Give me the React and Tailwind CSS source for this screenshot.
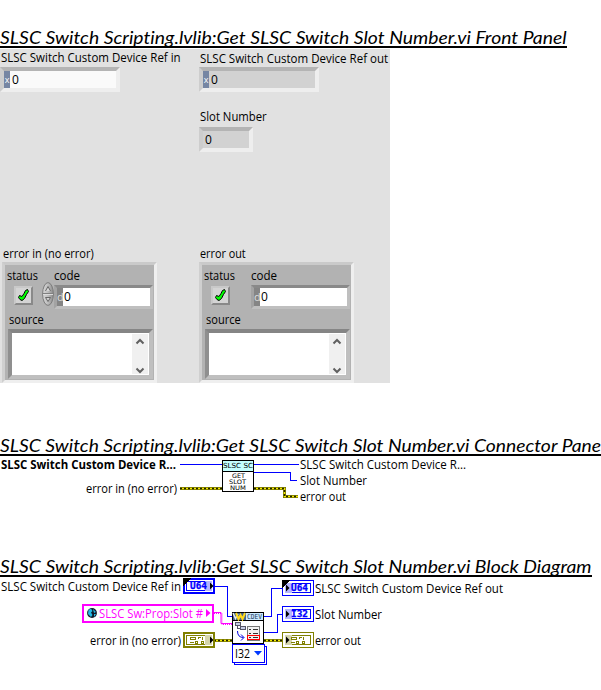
import { useLayoutEffect, useRef } from 'react';

/* Text squeezed or stretched to a fixed advance width. */
function Fit({ w, className = '', children }) {
  const ref = useRef(null);
  useLayoutEffect(() => {
    const el = ref.current;
    el.style.transform = 'none';
    el.style.transform = `scaleX(${w / el.offsetWidth})`;
  }, [w]);
  return (
    <span ref={ref} className={`inline-block origin-left whitespace-nowrap ${className}`}>
      {children}
    </span>
  );
}

function Heading({ w, children }) {
  return (
    <h2 className="h-[21px] w-[601px] overflow-hidden pt-px font-['Lato'] text-[17.3px] leading-[24px] italic [font-variant-ligatures:none]">
      <Fit w={w}>{children}</Fit>
    </h2>
  );
}

const label = "block h-4 text-[12px] leading-4";

function RadixBox({ width, fill, children }) {
  return (
    <div className={`flex h-[25px] border-4 border-t-[#b4b4b4] border-r-[#eeeeee] border-b-[#eeeeee] border-l-[#cdcdcd] ${width} ${fill}`}>
      {children}
    </div>
  );
}

function Radix() {
  return <span className="mr-0.5 w-1.5 bg-[#7686a3] text-center text-[9px] leading-[18px] text-white">x</span>;
}

function Chevron({ up }) {
  return (
    <svg className="h-[7px] w-2.5" viewBox="0 0 10 7">
      <path d={up ? 'M1.5 5.5L5 2L8.5 5.5' : 'M1.5 1.5L5 5L8.5 1.5'} fill="none" stroke="#606060" strokeWidth="2" />
    </svg>
  );
}

function Check() {
  return (
    <svg className="h-[13px] w-[13px]" viewBox="0 0 13 13">
      <path d="M8.5 1.5L10.5 .5L11.5 2.5L9.5 5.5L7.5 9.5L5 11.5L3 10.500L1.5 8.5L2.5 6.500L5 7.500L7 4.500Z" fill="#00ff00" stroke="#000" />
    </svg>
  );
}

function Spinner() {
  return (
    <svg className="h-6 w-3" viewBox="0 0 12 24">
      <defs>
        <linearGradient id="knob">
          <stop offset="0" stopColor="#d8d8d8" />
          <stop offset=".5" stopColor="#bdbdbd" />
          <stop offset="1" stopColor="#8a8a8a" />
        </linearGradient>
      </defs>
      <ellipse cx="6" cy="12" rx="5.4" ry="11.4" fill="url(#knob)" stroke="#7c7c7c" />
      <path d="M1 11.500H11" stroke="#808080" />
      <path d="M1 12.500H11" stroke="#dcdcdc" />
      <path d="M3.500 9L6 4.500L8.500 9M3.500 15.500H8.500L6 19.500Z" fill="#d6d6d6" stroke="#686868" />
    </svg>
  );
}

function ErrorCluster({ spinner }) {
  return (
    <div className="h-[121px] w-[155px] border-[3px] border-t-[#cacaca] border-r-[#efefef] border-b-[#efefef] border-l-[#cfcfcf] bg-[#b2b2b2]">
      <div className="flex h-[19px] pt-0.5">
        <span className={`${label} ml-0.5 w-[47px] pt-px`}><Fit w={31}>status</Fit></span>
        <span className={`${label} pt-px`}><Fit w={26}>code</Fit></span>
      </div>
      <div className="flex h-[26px] pt-px">
        <div className="mt-px ml-[9px] flex h-[19px] w-[19px] items-center justify-center border-2 border-t-[#c9c9c9] border-r-[#898989] border-b-[#898989] border-l-[#c9c9c9] bg-[#d4d4d4]">
          <Check />
        </div>
        <div className="-mt-[3px] ml-[9px] w-3 shrink-0">{spinner && <Spinner />}</div>
        <div className="flex h-6 w-[99px] shrink-0 border-[3px] border-t-[#898989] border-r-[#bfbfbf] border-b-[#bfbfbf] border-l-[#a3a3a3] bg-white">
          <span className="w-1.5 bg-[#858585] text-center text-[11px] leading-[18px] text-[#dddddd]">d</span>
          <span className="ml-px text-[12px] leading-[18px]">0</span>
        </div>
      </div>
      <span className={`${label} ml-1 h-[19px] pt-0.5`}><Fit w={35}>source</Fit></span>
      <div className="ml-[3px] flex h-[50px] w-[145px] justify-end border-4 border-t-[#858585] border-r-[#bfbfbf] border-b-[#bfbfbf] border-l-[#8f8f8f] bg-white">
        <div className="mt-px mr-px flex h-[40px] w-4 flex-col items-center justify-between bg-[#f0f0f0] pt-1">
          <Chevron up />
          <Chevron />
        </div>
      </div>
    </div>
  );
}

function FrontPanel() {
  return (
    <div className="flex h-[334px] w-[390px] overflow-hidden bg-[#e1e1e1] pt-px">
      <div className="w-[199px] shrink-0">
        <span className={`${label} ml-px`}><Fit w={180}>SLSC Switch Custom Device Ref in</Fit></span>
        <div className="mt-px h-[179px]">
          <RadixBox width="w-[120px]" fill="bg-[#fafafa]"><Radix /><span className="text-[12px] leading-[17px]">0</span></RadixBox>
        </div>
        <span className={`${label} ml-[3px]`}><Fit w={91}>error in (no error)</Fit></span>
        <div className="ml-0.5"><ErrorCluster spinner /></div>
      </div>
      <div className="w-[191px] shrink-0">
        <span className={`${label} ml-px pt-px`}><Fit w={188}>SLSC Switch Custom Device Ref out</Fit></span>
        <div className="mt-px h-[42px]">
          <RadixBox width="w-[120px]" fill="bg-[#d2d2d2]"><Radix /><span className="text-[12px] leading-[17px]">0</span></RadixBox>
        </div>
        <span className={`${label} ml-px`}><Fit w={67}>Slot Number</Fit></span>
        <div className="mt-0.5 h-[119px]">
          <RadixBox width="w-[54px]" fill="bg-[#d2d2d2]"><span className="ml-0.5 text-[12px] leading-[17px]">0</span></RadixBox>
        </div>
        <span className={`${label} ml-px`}><Fit w={46}>error out</Fit></span>
        <ErrorCluster />
      </div>
    </div>
  );
}

function Txt({ x, y, w, children, ...rest }) {
  return <text x={x} y={y} textLength={w} lengthAdjust="spacingAndGlyphs" fontSize="12" {...rest}>{children}</text>;
}

function ErrorWire({ d }) {
  return (
    <g fill="none">
      <path d={d} stroke="#6b6b00" strokeWidth="3" />
      <path d={d} stroke="#f5ec00" strokeWidth="1.6" />
      <path d={d} stroke="#202000" strokeWidth="1.6" strokeDasharray="2 2" />
    </g>
  );
}

const tiny = { fontSize: '6.2', fontFamily: 'DejaVu Sans', fontWeight: '400' };

function ConnectorPane() {
  return (
    <svg className="block h-[54px] w-[601px]" viewBox="0 456 601 54">
      <g fill="none" stroke="#0000ff" shapeRendering="crispEdges">
        <path d="M180 464.5H222M254 464.5H299M254 472.5H290.500V480.500H297" />
      </g>
      <ErrorWire d="M180 488.500H222" />
      <ErrorWire d="M254 488.500H284.500V496.500H298" />
      <g shapeRendering="crispEdges">
        <rect x="222.500" y="460.500" width="31" height="31" fill="#fff" stroke="#000" />
        <rect x="223" y="461" width="30" height="10" fill="#c4ffff" />
        <path d="M222 471.500H254" stroke="#000" />
      </g>
      <Txt x={223} y={468} w={30} {...tiny} fontSize="7">SLSC SC</Txt>
      <Txt x={232} y={478} w={13} {...tiny}>GET</Txt>
      <Txt x={229} y={484} w={17} {...tiny}>SLOT</Txt>
      <Txt x={230} y={490} w={16} {...tiny}>NUM</Txt>
      <Txt x={1} y={469} w={175} fontWeight="700">SLSC Switch Custom Device R...</Txt>
      <Txt x={86} y={493} w={91}>error in (no error)</Txt>
      <Txt x={300} y={469} w={166}>SLSC Switch Custom Device R...</Txt>
      <Txt x={300} y={485} w={67}>Slot Number</Txt>
      <Txt x={300} y={501} w={46}>error out</Txt>
    </svg>
  );
}

function Terminal({ x, y, color, tint, text, control, corner, tx = 9 }) {
  return (
    <g transform={`translate(${x} ${y})`}>
      <g shapeRendering="crispEdges">
        <rect x={control ? 1 : 0.5} y={control ? 1 : 0.5} width={control ? 30 : 31} height={control ? 14 : 15} fill="#fff" stroke={color} strokeWidth={control ? 2 : 1} />
        <rect x="3.500" y="3.500" width="25" height="9" fill="#fff" stroke={color} />
        <rect x={control ? 22 : 3} y="3" width="7" height="10" fill={tint} />
        {corner && <path d="M0 0H8L0 8Z" fill="#000" />}
      </g>
      <path d={control ? 'M27 4.500L30.500 8L27 11.500Z' : 'M4 4.500L7.500 8L4 11.500Z'} fill="#000" />
      {text ? (
        <text x={tx} y="11.300" textLength="17" lengthAdjust="spacingAndGlyphs" fontSize="9" fontFamily="DejaVu Sans Mono" fontWeight="700" fill={color} stroke={color} strokeWidth=".3">{text}</text>
      ) : (
        <path transform={control ? 'translate(-1 0)' : 'translate(1 0)'} d="M8.500 5.500H13.500V7.500H8.500ZM8 10.500H12M13.500 9.500H15.500V11.500H13.500ZM16.500 5V7M17 5.500H19M20.500 5V8M19.500 9.500H21.500V11.500H19.500Z" fill="none" stroke={color} shapeRendering="crispEdges" />
      )}
    </g>
  );
}

function BlockDiagram() {
  return (
    <svg className="block h-[113px] w-[601px]" viewBox="0 577 601 113">
      <path d="M215 586.500H227.500V616.500H233M264 616.500H271.500V588.500H282M264 632.500H277.500V614.500H282" fill="none" stroke="#0000ff" shapeRendering="crispEdges" />
      <path d="M214 612.500H221V623.500H232" fill="none" stroke="#ff00ff" strokeWidth="1" />
      <path d="M214 613.500H222V624.500H232" fill="none" stroke="#ff00ff" strokeWidth="1" strokeDasharray="1 1" />
      <ErrorWire d="M214 640.500H232" />
      <ErrorWire d="M264 640.500H283" />
      <Terminal x={183} y={578} color="#0000ff" tint="#b5b5ff" text="U64" control corner tx={7} />
      <Terminal x={282} y={580} color="#0000ff" tint="#b5b5ff" text="U64" corner />
      <Terminal x={282} y={606} color="#0000ff" tint="#b5b5ff" text="I32" />
      <Terminal x={183} y={632} color="#808000" tint="#d5d5aa" control />
      <Terminal x={282} y={632} color="#808000" tint="#d5d5aa" />
      <rect x="83" y="605" width="130" height="17" fill="#fff" stroke="#ff00ff" strokeWidth="2" shapeRendering="crispEdges" />
      <circle cx="92" cy="613" r="4.900" fill="#101828" />
      <path d="M88.500 610L91 608.500L92.500 611L91 612.500L92.500 615L91 617L88 614ZM93 609L96 612L94 613ZM94 614H96L94 617Z" fill="#23b9e5" />
      <path d="M206 609L210.500 613L206 617Z" fill="#ff00ff" />
      <Txt x={99} y={618} w={104} fill="#ff00ff">SLSC Sw:Prop:Slot #</Txt>

      <g shapeRendering="crispEdges">
        <rect x="232.500" y="612.500" width="31" height="31" fill="#fff" stroke="#000" />
        <rect x="233" y="613" width="13" height="7" fill="#44658e" />
        <rect x="246" y="613" width="17" height="7" fill="#cceaff" />
        <path d="M233 620.500H263" stroke="#000" />
      </g>
      <path d="M233 613L235.500 618.500L238 614" fill="none" stroke="#e8edf5" strokeWidth="1.500" />
      <path d="M236 613L238.500 619L240.500 615L242.500 619L245 613" fill="none" stroke="#ffd91a" strokeWidth="2" />
      <text x="247" y="619.300" fontSize="7" textLength="15" lengthAdjust="spacingAndGlyphs" fontFamily="DejaVu Sans Mono" fill="#17395c">CDEV</text>
      <g fill="#c8cee6" stroke="#556" shapeRendering="crispEdges">
        <rect x="235.500" y="622.500" width="5" height="3" />
        <rect x="240.500" y="626.500" width="5" height="3" />
        <path d="M237.500 626V628.500H240" fill="none" />
        <rect x="247.500" y="626.500" width="12" height="14" fill="#f2f2f2" stroke="#777" />
        <path d="M249 629.500H251M253 629.500H258M249 633.500H251M253 633.500H258M249 637.500H251M253 637.500H258" stroke="#333" />
        <rect x="247.500" y="635.500" width="12" height="4" fill="none" stroke="#ff0000" />
      </g>
      <path d="M237.500 631Q237.500 637.500 243.500 637.500M241 634.500L244 637.500L241 640.500" fill="none" stroke="#0000e0" />
      <g fill="#fff" stroke="#0000ff" shapeRendering="crispEdges">
        <rect x="234.500" y="646.500" width="32" height="18" />
        <rect x="232.500" y="644.500" width="32" height="18" />
      </g>
      <Txt x={235} y={658} w={15}>I32</Txt>
      <path d="M254 651H262L258 655.500Z" fill="#0038ff" />

      <Txt x={1} y={591} w={180}>SLSC Switch Custom Device Ref in</Txt>
      <Txt x={90} y={645} w={91}>error in (no error)</Txt>
      <Txt x={315} y={593} w={188}>SLSC Switch Custom Device Ref out</Txt>
      <Txt x={315} y={619} w={67}>Slot Number</Txt>
      <Txt x={315} y={645} w={46}>error out</Txt>
    </svg>
  );
}

export default function App() {
  return (
    <main className="flex h-[690px] w-[601px] flex-col overflow-hidden bg-white pt-[25px] font-['Open_Sans',sans-serif] text-black">
      <Heading w={567}>SLSC Switch Scripting.lvlib:Get SLSC Switch Slot Number.vi Front Panel</Heading>
      <div className="mb-px h-0.5 w-[567px] bg-black" />
      <FrontPanel />
      <div className="h-[50px]" />
      <Heading w={601}>SLSC Switch Scripting.lvlib:Get SLSC Switch Slot Number.vi Connector Pane</Heading>
      <div className="h-0.5 w-[601px] bg-black" />
      <ConnectorPane />
      <div className="h-[44px]" />
      <Heading w={592}>SLSC Switch Scripting.lvlib:Get SLSC Switch Slot Number.vi Block Diagram</Heading>
      <div className="h-0.5 w-[592px] bg-black" />
      <BlockDiagram />
    </main>
  );
}
